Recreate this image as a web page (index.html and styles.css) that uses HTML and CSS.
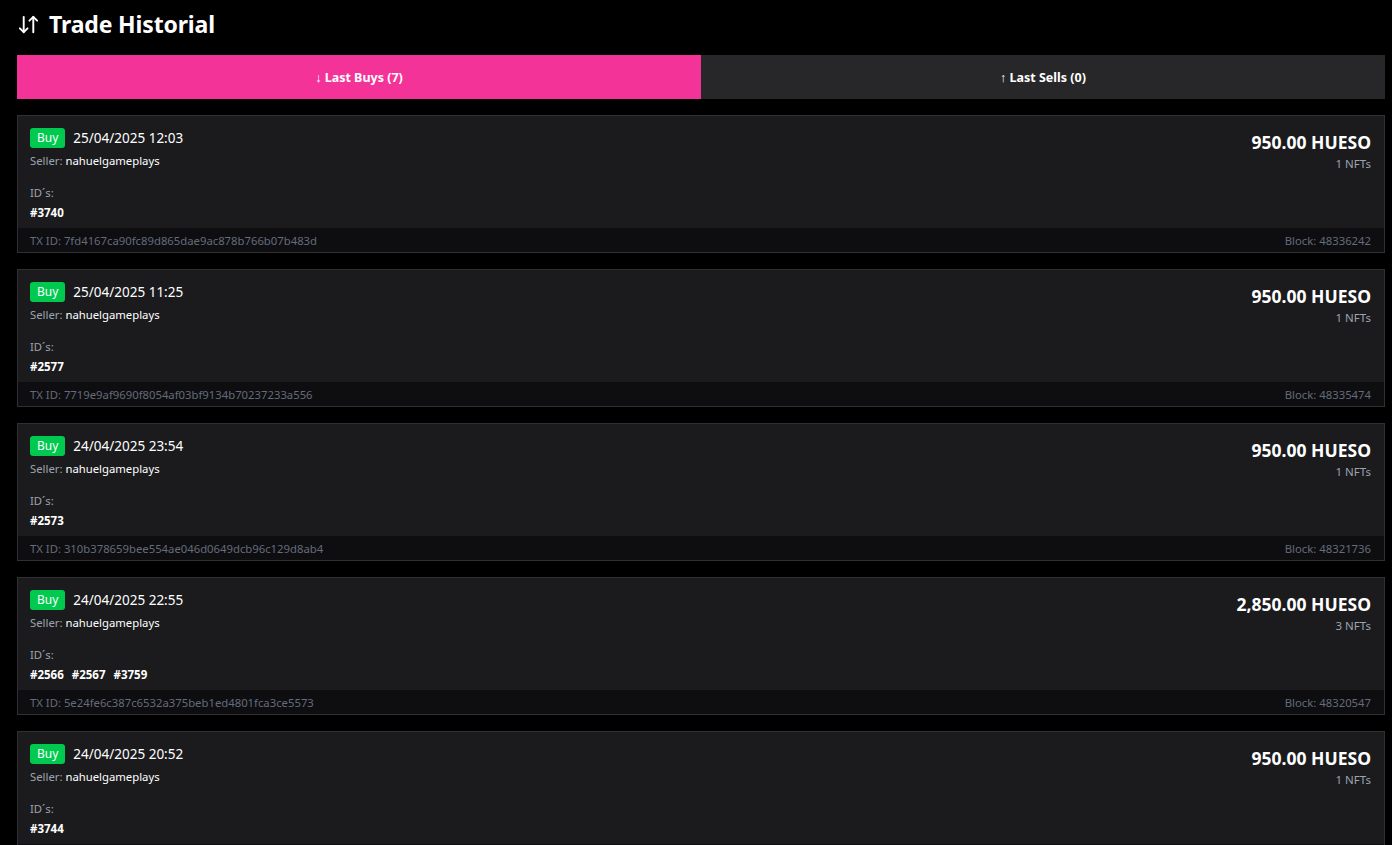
FILE: index.html
```html
<!DOCTYPE html>
<html lang="en">
<head>
<meta charset="utf-8">
<title>Trade Historial</title>
<link rel="stylesheet" href="styles.css">
</head>
<body>
<div class="page">
  <h1 class="title">
    <svg class="title-icon" viewBox="0 0 24 24" fill="none" stroke="currentColor" stroke-width="2" stroke-linecap="round" stroke-linejoin="round"><path d="m3 16 4 4 4-4"/><path d="M7 20V4"/><path d="m21 8-4-4-4 4"/><path d="M17 4v16"/></svg>
    <span>Trade Historial</span>
  </h1>
  <div class="tabs">
    <button class="tab active">↓ Last Buys (7)</button>
    <button class="tab">↑ Last Sells (0)</button>
  </div>
  <div class="list">
    <div class="card">
      <div class="card-body">
        <div class="left">
          <div class="head"><span class="badge">Buy</span><span class="date">25/04/2025 12:03</span></div>
          <div class="seller">Seller: <span class="name">nahuelgameplays</span></div>
          <div class="ids-label">ID´s:</div>
          <div class="ids"><span>#3740</span></div>
        </div>
        <div class="right">
          <div class="amount">950.00 HUESO</div>
          <div class="nfts">1 NFTs</div>
        </div>
      </div>
      <div class="card-foot"><span>TX ID: 7fd4167ca90fc89d865dae9ac878b766b07b483d</span><span>Block: 48336242</span></div>
    </div>
    <div class="card">
      <div class="card-body">
        <div class="left">
          <div class="head"><span class="badge">Buy</span><span class="date">25/04/2025 11:25</span></div>
          <div class="seller">Seller: <span class="name">nahuelgameplays</span></div>
          <div class="ids-label">ID´s:</div>
          <div class="ids"><span>#2577</span></div>
        </div>
        <div class="right">
          <div class="amount">950.00 HUESO</div>
          <div class="nfts">1 NFTs</div>
        </div>
      </div>
      <div class="card-foot"><span>TX ID: 7719e9af9690f8054af03bf9134b70237233a556</span><span>Block: 48335474</span></div>
    </div>
    <div class="card">
      <div class="card-body">
        <div class="left">
          <div class="head"><span class="badge">Buy</span><span class="date">24/04/2025 23:54</span></div>
          <div class="seller">Seller: <span class="name">nahuelgameplays</span></div>
          <div class="ids-label">ID´s:</div>
          <div class="ids"><span>#2573</span></div>
        </div>
        <div class="right">
          <div class="amount">950.00 HUESO</div>
          <div class="nfts">1 NFTs</div>
        </div>
      </div>
      <div class="card-foot"><span>TX ID: 310b378659bee554ae046d0649dcb96c129d8ab4</span><span>Block: 48321736</span></div>
    </div>
    <div class="card">
      <div class="card-body">
        <div class="left">
          <div class="head"><span class="badge">Buy</span><span class="date">24/04/2025 22:55</span></div>
          <div class="seller">Seller: <span class="name">nahuelgameplays</span></div>
          <div class="ids-label">ID´s:</div>
          <div class="ids"><span>#2566</span><span>#2567</span><span>#3759</span></div>
        </div>
        <div class="right">
          <div class="amount">2,850.00 HUESO</div>
          <div class="nfts">3 NFTs</div>
        </div>
      </div>
      <div class="card-foot"><span>TX ID: 5e24fe6c387c6532a375beb1ed4801fca3ce5573</span><span>Block: 48320547</span></div>
    </div>
    <div class="card">
      <div class="card-body">
        <div class="left">
          <div class="head"><span class="badge">Buy</span><span class="date">24/04/2025 20:52</span></div>
          <div class="seller">Seller: <span class="name">nahuelgameplays</span></div>
          <div class="ids-label">ID´s:</div>
          <div class="ids"><span>#3744</span></div>
        </div>
        <div class="right">
          <div class="amount">950.00 HUESO</div>
          <div class="nfts">1 NFTs</div>
        </div>
      </div>
      <div class="card-foot"><span>TX ID: 0a1c5e2f7b9d3a64c8e0f12b4d6a8c0e2f4a6b8c</span><span>Block: 48318812</span></div>
    </div>
  </div>
</div>
</body>
</html>
```
FILE: styles.css
```css
html, body {
  margin: 0;
  padding: 0;
  background: #000;
  color: #fff;
  font-family: "Noto Sans", "Open Sans", sans-serif;
  overflow: hidden;
}
.page {
  width: 1368px;
  padding: 8px 0 0 17px;
}
.title {
  display: flex;
  align-items: center;
  gap: 9px;
  margin: 0 0 15px 0;
  height: 32px;
  font-size: 23px;
  font-weight: 700;
  letter-spacing: -0.15px;
}
.title-icon {
  width: 23px;
  height: 23px;
}
.tabs {
  display: flex;
  height: 44px;
  margin-bottom: 16px;
}
.tab {
  flex: 1;
  border: none;
  background: #27272a;
  color: #fff;
  font-family: inherit;
  font-size: 12.5px;
  font-weight: 700;
  cursor: pointer;
  padding: 0;
}
.tab.active {
  background: #f43399;
}
.list {
  display: flex;
  flex-direction: column;
  gap: 16px;
}
.card {
  background: #1b1b1e;
  border: 1px solid #303034;
}
.card-body {
  display: flex;
  justify-content: space-between;
  padding: 12px 13px 7px 12px;
}
.head {
  display: flex;
  align-items: center;
  gap: 8px;
  height: 20px;
}
.badge {
  background: #00c94f;
  color: #fff;
  font-size: 12px;
  line-height: 20px;
  padding: 0 7px;
  border-radius: 3px;
}
.date {
  font-size: 13.5px;
  color: #fff;
}
.seller {
  margin-top: 5px;
  font-size: 11.3px;
  line-height: 16px;
  color: #9ca3af;
}
.seller .name {
  color: #fff;
}
.ids-label {
  margin-top: 16px;
  font-size: 11.3px;
  line-height: 16px;
  color: #9ca3af;
}
.ids {
  margin-top: 4px;
  display: flex;
  gap: 8px;
  font-size: 11.5px;
  line-height: 16px;
  font-weight: 700;
}
.right {
  text-align: right;
}
.amount {
  font-size: 17.5px;
  font-weight: 700;
  line-height: 28px;
}
.nfts {
  font-size: 11.5px;
  line-height: 16px;
  color: #9ca3af;
}
.card-foot {
  display: flex;
  justify-content: space-between;
  align-items: center;
  height: 24px;
  padding: 0 13px 0 12px;
  background: #0e0e10;
  font-size: 11.3px;
  color: #646b7c;
}
```
